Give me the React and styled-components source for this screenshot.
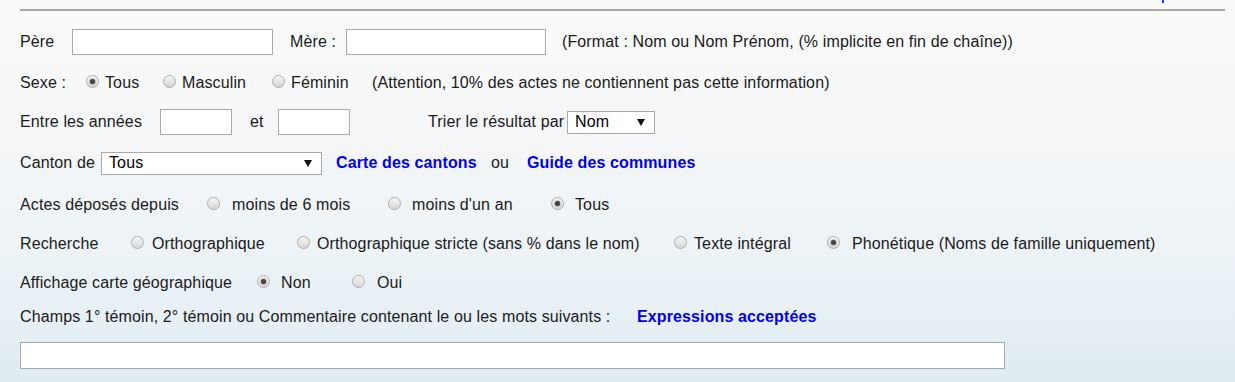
import React from "react";
import styled, { createGlobalStyle } from "styled-components";

const Global = createGlobalStyle`
  html, body { margin: 0; padding: 0; }
  body {
    font-family: "Liberation Sans", Arial, sans-serif;
    font-size: 16px;
    letter-spacing: 0.12px;
    color: #1a1a1a;
    background: linear-gradient(to bottom, #fafafa 0px, #f6f7f8 120px, #e9f1f6 300px, #dfebf1 382px);
    min-height: 382px;
  }
`;

const Page = styled.div`
  width: 1235px;
  height: 382px;
  overflow: hidden;
  padding: 0 0 0 20px;
  box-sizing: border-box;
`;

const TopBar = styled.div`
  display: flex;
  justify-content: flex-end;
  width: 1205px;
  height: 11px;
  border-bottom: 2px solid #a8a8a8;
  box-sizing: border-box;
  padding-right: 61px;
`;

const TopMark = styled.span`
  display: block;
  width: 2px;
  height: 3px;
  background: #1f3bff;
`;

const Form = styled.form`
  display: flex;
  flex-direction: column;
  padding-top: 11px;
`;

const Row = styled.div`
  display: flex;
  align-items: center;
  height: ${(p) => p.$h}px;
  white-space: nowrap;
`;

const Cell = styled.span`
  flex: none;
  display: flex;
  align-items: center;
  width: ${(p) => (p.$w ? `${p.$w}px` : "auto")};
  padding-left: ${(p) => p.$pl || 0}px;
  box-sizing: border-box;
`;

const TextInput = styled.input.attrs({ type: "text" })`
  flex: none;
  width: ${(p) => p.$w}px;
  height: ${(p) => p.$h || 26}px;
  box-sizing: border-box;
  border: 1px solid #a9a9a9;
  background: #fff;
  margin: 0;
  padding: 2px 4px;
  font: inherit;
`;

const SelectBox = styled.div`
  flex: none;
  display: flex;
  align-items: center;
  justify-content: space-between;
  width: ${(p) => p.$w}px;
  height: 23px;
  box-sizing: border-box;
  border: 1px solid #a9a9a9;
  background: #fff;
  padding: 0 9px 0 7px;
  color: #000;
`;

const Arrow = styled.span`
  width: 0;
  height: 0;
  border-left: 4px solid transparent;
  border-right: 4px solid transparent;
  border-top: 7px solid #111;
  margin-top: 1px;
`;

const Link = styled.a`
  color: #0000f0;
  font-weight: bold;
  text-decoration: none;
  cursor: pointer;
`;

const Option = styled.label`
  flex: none;
  display: flex;
  align-items: center;
  width: ${(p) => (p.$w ? `${p.$w}px` : "auto")};
  gap: ${(p) => p.$gap || 6}px;
`;

const RadioDot = styled.span`
  flex: none;
  width: 13px;
  height: 13px;
  box-sizing: border-box;
  border-radius: 50%;
  border: 1px solid #ababab;
  background: linear-gradient(to bottom, #f6f6f6 0%, #e6e6e6 50%, #d2d2d2 100%);
  box-shadow: inset 0 0 1px #ffffff;
  display: flex;
  align-items: center;
  justify-content: center;
  margin-top: -3px;
  &::after {
    content: "";
    width: 5px;
    height: 5px;
    border-radius: 50%;
    background: ${(p) => (p.$on ? "#444" : "transparent")};
    box-shadow: ${(p) => (p.$on ? "0 0 1px 0.5px #999" : "none")};
  }
`;

function Radio({ on, children, w, gap }) {
  return (
    <Option $w={w} $gap={gap}>
      <RadioDot $on={on} />
      <span>{children}</span>
    </Option>
  );
}

export default function App() {
  return (
    <>
      <Global />
      <Page>
        <TopBar>
          <TopMark />
        </TopBar>
        <Form>
          <Row $h={40}>
            <Cell $w={52}>Père</Cell>
            <TextInput $w={201} />
            <Cell $w={73} $pl={17}>Mère :</Cell>
            <TextInput $w={200} />
            <Cell $pl={16}>(Format : Nom ou Nom Prénom, (% implicite en fin de chaîne))</Cell>
          </Row>
          <Row $h={42}>
            <Cell $w={66}>Sexe :</Cell>
            <Radio on w={77}>Tous</Radio>
            <Radio w={109}>Masculin</Radio>
            <Radio w={100}>Féminin</Radio>
            <Cell>(Attention, 10% des actes ne contiennent pas cette information)</Cell>
          </Row>
          <Row $h={36}>
            <Cell $w={140}>Entre les années</Cell>
            <TextInput $w={72} />
            <Cell $w={46} $pl={18}>et</Cell>
            <TextInput $w={72} />
            <Cell $w={217} $pl={78}>Trier le résultat par</Cell>
            <SelectBox $w={88}>
              <span>Nom</span>
              <Arrow />
            </SelectBox>
          </Row>
          <Row $h={46}>
            <Cell $w={81}>Canton de</Cell>
            <SelectBox $w={221}>
              <span>Tous</span>
              <Arrow />
            </SelectBox>
            <Cell $w={169} $pl={14}>
              <Link>Carte des cantons</Link>
            </Cell>
            <Cell $w={36}>ou</Cell>
            <Link>Guide des communes</Link>
          </Row>
          <Row $h={38}>
            <Cell $w={187}>Actes déposés depuis</Cell>
            <Radio w={181} gap={12}>moins de 6 mois</Radio>
            <Radio w={163} gap={11}>moins d'un an</Radio>
            <Radio on gap={11}>Tous</Radio>
          </Row>
          <Row $h={40}>
            <Cell $w={111}>Recherche</Cell>
            <Radio w={166} gap={8}>Orthographique</Radio>
            <Radio w={377} gap={7}>Orthographique stricte (sans % dans le nom)</Radio>
            <Radio w={153} gap={7}>Texte intégral</Radio>
            <Radio on gap={12}>Phonétique (Noms de famille uniquement)</Radio>
          </Row>
          <Row $h={38}>
            <Cell $w={237}>Affichage carte géographique</Cell>
            <Radio on w={95} gap={11}>Non</Radio>
            <Radio gap={12}>Oui</Radio>
          </Row>
          <Row $h={30}>
            <Cell $w={617}>Champs 1° témoin, 2° témoin ou Commentaire contenant le ou les mots suivants :</Cell>
            <Link>Expressions acceptées</Link>
          </Row>
          <Row $h={46}>
            <TextInput $w={985} $h={27} />
          </Row>
        </Form>
      </Page>
    </>
  );
}
